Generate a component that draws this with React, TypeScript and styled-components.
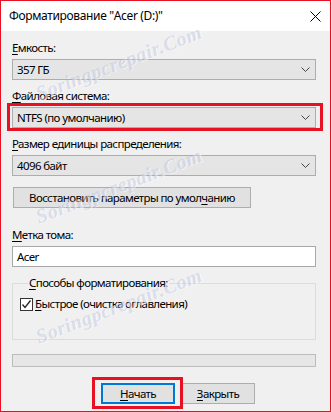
import React from "react";
import styled, { createGlobalStyle } from "styled-components";

const GlobalStyle = createGlobalStyle`
  html, body {
    margin: 0;
    padding: 0;
    background: #ffffff;
  }
  body {
    font-family: "Noto Sans", "Liberation Sans", sans-serif;
    font-size: 11.5px;
    letter-spacing: -0.6px;
    color: #000000;
  }
`;

const Window = styled.div`
  position: relative;
  width: 331px;
  height: 412px;
  box-sizing: border-box;
  border: 1px solid #e81123;
  background: #f0f0f0;
  overflow: hidden;
  display: flex;
  flex-direction: column;
`;

const TitleBar = styled.div`
  height: 30px;
  flex: none;
  background: #ffffff;
  display: flex;
  align-items: center;
  justify-content: space-between;
  padding: 0 9px 0 8px;
  line-height: 16px;
  font-size: 12px;
  letter-spacing: -0.35px;
`;

const CloseIcon = styled.svg`
  display: block;
`;

const Body = styled.div`
  padding: 9px 14px 0 11px;
  display: flex;
  flex-direction: column;
`;

const Field = styled.div<{ $gap?: number }>`
  display: flex;
  flex-direction: column;
  margin-bottom: ${(p) => p.$gap ?? 8}px;
`;

const Label = styled.label`
  display: block;
  line-height: 16px;
  height: 16px;
  margin-bottom: 3px;
  white-space: nowrap;
`;

const Mn = styled.u`
  text-decoration-thickness: 1px;
  text-underline-offset: 2px;
`;

const ControlWrap = styled.div`
  position: relative;
`;

const Combo = styled.div`
  height: 21px;
  box-sizing: border-box;
  border: 1px solid #adadad;
  background: #e5e5e5;
  display: flex;
  align-items: center;
  justify-content: space-between;
  padding: 0 5px 0 4px;
  line-height: 16px;
`;

const TextBox = styled.div`
  height: 21px;
  box-sizing: border-box;
  border: 1px solid #a8a8a8;
  background: #ffffff;
  display: flex;
  align-items: center;
  padding: 0 4px;
  line-height: 16px;
`;

const Button = styled.button<{ $width: number; $default?: boolean }>`
  width: ${(p) => p.$width}px;
  height: 21px;
  box-sizing: border-box;
  margin: 0;
  padding: 0;
  font: inherit;
  letter-spacing: inherit;
  line-height: 16px;
  white-space: nowrap;
  color: #000;
  background: #e1e1e1;
  border: ${(p) => (p.$default ? "2px solid #0078d7" : "1px solid #adadad")};
  display: flex;
  align-items: center;
  justify-content: center;
`;

const Highlight = styled.div<{ $t: number; $r: number; $b: number; $l: number }>`
  position: absolute;
  top: ${(p) => -p.$t}px;
  right: ${(p) => -p.$r}px;
  bottom: ${(p) => -p.$b}px;
  left: ${(p) => -p.$l}px;
  border: 3px solid #e81123;
  pointer-events: none;
  z-index: 2;
`;

const Group = styled.fieldset`
  margin: 0;
  padding: 5px 7px 27px 7px;
  border: 1px solid #dcdcdc;
  min-width: 0;
`;

const Legend = styled.legend`
  margin-left: 8px;
  padding: 0 1px;
  line-height: 16px;
`;

const CheckRow = styled.div`
  display: flex;
  align-items: center;
  gap: 2px;
  height: 16px;
  line-height: 16px;
`;

const CheckBox = styled.span`
  width: 13px;
  height: 13px;
  box-sizing: border-box;
  border: 1px solid #333333;
  background: #ffffff;
  display: flex;
  align-items: center;
  justify-content: center;
`;

const Progress = styled.div`
  margin-top: 14px;
  height: 13px;
  box-sizing: border-box;
  border: 1px solid #bcbcbc;
  background: #e6e6e6;
`;

const ButtonRow = styled.div`
  display: flex;
  gap: 6px;
  margin-top: 16px;
  padding-left: 89px;
`;

// site watermark stamped over the screenshot
const Watermark = styled.span<{ $x: number; $y: number }>`
  position: absolute;
  left: ${(p) => p.$x}px;
  top: ${(p) => p.$y}px;
  transform: translate(-50%, -50%) rotate(-21deg);
  font-family: "Liberation Serif", serif;
  font-weight: bold;
  font-style: italic;
  font-size: 20px;
  letter-spacing: 0.5px;
  white-space: nowrap;
  color: rgba(160, 170, 210, 0.32);
  text-shadow: 1px 1px 0 rgba(255, 255, 255, 0.5);
  pointer-events: none;
  z-index: 1;
`;

const marks = [
  { x: 118, y: 62 },
  { x: 118, y: 185 },
  { x: 118, y: 305 },
];

const Chevron = () => (
  <svg width="9" height="5" viewBox="0 0 9 5">
    <polyline points="0.5,0.5 4.5,4.5 8.5,0.5" fill="none" stroke="#3a4a3a" strokeWidth="1" />
  </svg>
);

const App: React.FC = () => {
  return (
    <>
      <GlobalStyle />
      <Window>
        <TitleBar>
          <span>Форматирование "Acer (D:)"</span>
          <CloseIcon width="11" height="11" viewBox="0 0 11 11">
            <path d="M0.5 0.5 L10.5 10.5 M10.5 0.5 L0.5 10.5" stroke="#000" strokeWidth="1" />
          </CloseIcon>
        </TitleBar>
        <Body>
          <Field>
            <Label>
              <Mn>Е</Mn>мкость:
            </Label>
            <Combo>
              <span>357 ГБ</span>
              <Chevron />
            </Combo>
          </Field>
          <Field>
            <Label>
              <Mn>Ф</Mn>айловая система:
            </Label>
            <ControlWrap>
              <Combo>
                <span>NTFS (по умолчанию)</span>
                <Chevron />
              </Combo>
              <Highlight $t={4} $r={7} $b={3} $l={5} />
            </ControlWrap>
          </Field>
          <Field $gap={11}>
            <Label>
              <Mn>Р</Mn>азмер единицы распределения:
            </Label>
            <Combo>
              <span>4096 байт</span>
              <Chevron />
            </Combo>
          </Field>
          <Field $gap={19}>
            <Button $width={238} style={{ marginLeft: 1 }}>
              <span>
                Восстановить параметры по умол<Mn>ч</Mn>анию
              </span>
            </Button>
          </Field>
          <Field>
            <Label>
              <Mn>М</Mn>етка тома:
            </Label>
            <TextBox>Acer</TextBox>
          </Field>
          <Group>
            <Legend>
              <Mn>С</Mn>пособы форматирования:
            </Legend>
            <CheckRow>
              <CheckBox>
                <svg width="11" height="11" viewBox="0 0 11 11">
                  <polyline points="1.5,5.5 4,8.5 9.5,1.5" fill="none" stroke="#222" strokeWidth="1.3" />
                </svg>
              </CheckBox>
              <span>
                <Mn>Б</Mn>ыстрое (очистка оглавления)
              </span>
            </CheckRow>
          </Group>
          <Progress />
          <ButtonRow>
            <ControlWrap>
              <Button $width={74} $default>
                <span>
                  <Mn>Н</Mn>ачать
                </span>
              </Button>
              <Highlight $t={6} $r={8} $b={5} $l={9} />
            </ControlWrap>
            <Button $width={74}>
              <span>
                <Mn>З</Mn>акрыть
              </span>
            </Button>
          </ButtonRow>
        </Body>
        {marks.map((m, i) => (
          <Watermark key={i} $x={m.x} $y={m.y}>
            Soringpcrepair.Com
          </Watermark>
        ))}
      </Window>
    </>
  );
};

export default App;
